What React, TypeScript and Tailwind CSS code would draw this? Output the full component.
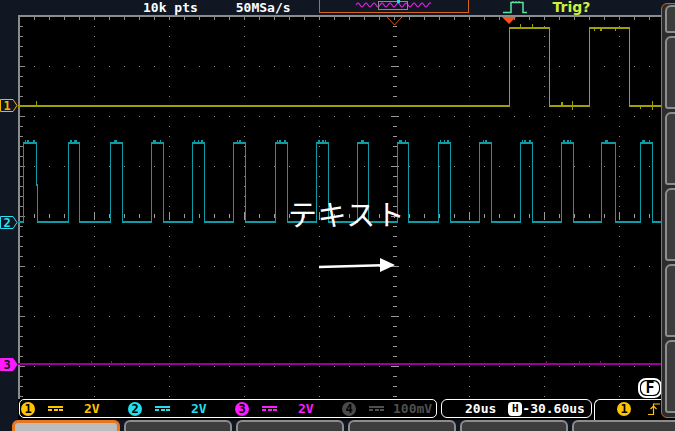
import React from "react";

const mono = "font-['DejaVu_Sans_Mono','Liberation_Mono',monospace] font-bold";

type R = { x: number; y: number; w: number; h: number };

// turn a list of step vertices into crisp pixel rects (2px horizontals, 1px verticals)
function trace(pts: [number, number][]): R[] {
  const out: R[] = [];
  for (let i = 0; i < pts.length - 1; i++) {
    const [x1, y1] = pts[i];
    const [x2, y2] = pts[i + 1];
    if (y1 === y2) out.push({ x: Math.min(x1, x2), y: y1, w: Math.abs(x2 - x1) + 1, h: 2 });
    else out.push({ x: x1, y: Math.min(y1, y2), w: 1, h: Math.abs(y2 - y1) + 2 });
  }
  return out;
}

const MAJ_X = [94, 169, 244, 319, 469, 544, 619];
const MAJ_Y = [66, 116, 166, 266, 316, 366];
const range = (a: number, b: number, s: number) => {
  const r: number[] = [];
  for (let v = a; v <= b; v += s) r.push(v);
  return r;
};

const ch1 = trace([
  [18, 105], [509, 105], [509, 27], [549, 27], [549, 105],
  [589, 105], [589, 27], [629, 27], [629, 105], [675, 105],
]);

const RISES: [number, number][] = [
  [68, 11], [110, 12], [151, 12], [192, 12], [233, 12], [275, 12], [316, 12],
  [357, 11], [397, 11], [438, 12], [479, 12], [520, 12], [561, 12], [601, 14], [640, 12],
];

const ch2Pts: [number, number][] = [
  [18, 221], [23, 221], [23, 142], [36, 142], [36, 184], [37, 184], [37, 221],
];
RISES.forEach(([r, w]) => {
  ch2Pts.push([r, 221], [r, 142], [r + w, 142], [r + w, 221]);
});
ch2Pts.push([675, 221]);
const ch2 = trace(ch2Pts);
const ch2Noise: R[] = [];
[[23, 13] as [number, number], ...RISES].forEach(([r, w], i) => {
  [2, 4, 6, w - 3].forEach((o, j) => {
    if ((i + j) % 3 !== 2) ch2Noise.push({ x: r + o, y: 140, w: 1 + ((i + j) % 2), h: 2 });
  });
});

function Scope() {
  const grid = "#8a8a8a";
  return (
    <svg width={657} height={384} viewBox="18 15 657 384" shapeRendering="crispEdges" className="block">
      <rect x={18} y={15} width={657} height={384} fill="#000" />
      {/* frame */}
      <rect x={18} y={15} width={657} height={2} fill="#8c8c8c" />
      <rect x={18} y={15} width={2} height={384} fill="#8c8c8c" />
      {range(34, 661, 15).map((x) => (
        <rect key={"tt" + x} x={x} y={17} width={1} height={3} fill={grid} />
      ))}
      {range(26, 396, 10).map((y) => (
        <rect key={"lt" + y} x={20} y={y} width={MAJ_Y.includes(y) || y === 216 ? 5 : 3} height={1} fill={grid} />
      ))}
      {/* dotted graticule */}
      {MAJ_X.map((x) =>
        range(26, 396, 10).map((y) => <rect key={`d${x}-${y}`} x={x} y={y} width={1} height={1} fill={grid} />)
      )}
      {MAJ_Y.map((y) =>
        range(34, 661, 15).map((x) => <rect key={`h${x}-${y}`} x={x} y={y} width={1} height={1} fill={grid} />)
      )}
      {/* centre axes */}
      {range(26, 396, 10).map((y) => {
        const big = MAJ_Y.includes(y) || y === 216;
        return <rect key={"cv" + y} x={big ? 391 : 393} y={y} width={big ? 8 : 4} height={1} fill="#9a9a9a" />;
      })}
      {range(34, 661, 15).map((x) => {
        const big = MAJ_X.includes(x);
        return <rect key={"ch" + x} x={x} y={big ? 212 : 214} width={1} height={big ? 8 : 4} fill="#9a9a9a" />;
      })}
      {/* channels */}
      <rect x={18} y={363} width={657} height={2} fill="#990099" />
      {[91, 111, 546, 579, 600].map((x) => (
        <rect key={"m" + x} x={x} y={361} width={1} height={3} fill="#990099" />
      ))}
      {ch2.map((r, i) => (
        <rect key={"c2" + i} x={r.x} y={r.y} width={r.w} height={r.h} fill="#0e9ca4" />
      ))}
      {ch2Noise.map((r, i) => (
        <rect key={"n2" + i} x={r.x} y={r.y} width={r.w} height={r.h} fill="#0e9ca4" />
      ))}
      {ch1.map((r, i) => (
        <rect key={"c1" + i} x={r.x} y={r.y} width={r.w} height={r.h} fill="#a0a000" />
      ))}
      {[
        [36, 101, 1, 5], [520, 24, 1, 4], [532, 24, 1, 4], [561, 102, 2, 3], [572, 101, 1, 9],
        [594, 28, 1, 3], [600, 28, 2, 3], [615, 28, 1, 3], [640, 106, 1, 3], [652, 101, 1, 9],
      ].map(([x, y, w, h]) => (
        <rect key={`s${x}`} x={x} y={y} width={w} height={h} fill="#a0a000" />
      ))}
      {/* trigger markers */}
      <polygon points="502,17 516,17 509,24" fill="#ff5014" shapeRendering="auto" />
      <polyline points="387,17 394.5,25 402,17" fill="none" stroke="#e4501c" strokeWidth={1} shapeRendering="auto" />
    </svg>
  );
}

function Marker({ n, color, filled, top }: { n: number; color: string; filled?: boolean; top: number }) {
  return (
    <svg width={18} height={13} className="absolute left-0" style={{ top }}>
      <polygon points="0.5,0.5 13,0.5 17,6.5 13,12.5 0.5,12.5" fill={filled ? color : "#111623"} stroke={color} strokeWidth={1} />
      <text x={7} y={10.5} textAnchor="middle" fontSize={12} fontWeight={700} fill={filled ? "#111623" : color} fontFamily="DejaVu Sans Mono, monospace">
        {n}
      </text>
    </svg>
  );
}

function Dc({ color }: { color: string }) {
  return (
    <svg width={15} height={6} className="shrink-0" shapeRendering="crispEdges">
      <rect x={0} y={0} width={15} height={2} fill={color} />
      <rect x={0} y={3} width={4} height={2} fill={color} />
      <rect x={5.5} y={3} width={4} height={2} fill={color} />
      <rect x={11} y={3} width={4} height={2} fill={color} />
    </svg>
  );
}

function Chan({ n, bg, fg, text, gap = 21, width = 107 }: { n: number; bg: string; fg: string; text: string; gap?: number; width?: number }) {
  return (
    <div className="flex items-center shrink-0" style={{ width }}>
      <div className={`w-[14px] h-[14px] rounded-full flex items-center justify-center text-[12px] leading-none text-black ${mono}`} style={{ background: bg }}>
        {n}
      </div>
      <div className="ml-[13px]">
        <Dc color={fg} />
      </div>
      <span className={`text-[13px] leading-none ${mono}`} style={{ color: fg, marginLeft: gap }}>
        {text}
      </span>
    </div>
  );
}

export default function App() {
  const wave: string[] = [];
  for (let x = 0; x <= 75; x++) wave.push(`${37 + x},${(5 - 2 * Math.sin((x / 8) * Math.PI * 2)).toFixed(2)}`);
  return (
    <div className="relative w-[675px] h-[431px] overflow-hidden bg-[#111623] text-white">
      {/* top bar */}
      <div className="h-[15px] flex items-start">
        <span className={`ml-[143px] text-[13px] leading-[15px] text-white ${mono}`}>10k pts</span>
        <span className={`ml-[38px] text-[13px] leading-[15px] text-white ${mono}`}>50MSa/s</span>
        <div className="ml-[28px] w-[150px] h-[13px] border-x border-b border-[#d4641c] relative">
          <svg width={150} height={12} className="absolute left-[-1px] top-0">
            <polyline points={wave.join(" ")} fill="none" stroke="#e020e0" strokeWidth={1.2} />
            <rect x={59.5} y={1.5} width={29} height={8} fill="none" stroke="#8a8a8a" strokeWidth={1} />
            <rect x={78} y={0} width={3} height={3} fill="#20d8f0" />
          </svg>
        </div>
        <svg width={24} height={14} className="ml-[34px]">
          <path d="M0 12.5 H8 V2.5 H20 V12.5 H24" fill="none" stroke="#5fe39a" strokeWidth={1.5} />
          <path d="M10 1 V3 M13 1 V3 M16 1 V3" stroke="#5fe39a" strokeWidth={1} />
        </svg>
        <span className="ml-[26px] text-[14px] leading-[14px] font-bold text-[#cdf03c] font-['DejaVu_Sans',sans-serif]">Trig?</span>
      </div>

      {/* screen */}
      <div className="flex h-[405px]">
        <div className="w-[18px] shrink-0" />
        <div className="flex-1 flex flex-col bg-black">
          <Scope />
          <div className="h-[21px] flex items-start">
            <div className="ml-px w-[418px] h-[19px] border border-white rounded-[5px] flex items-center pl-px">
              <Chan n={1} bg="#ffc400" fg="#ffc400" text="2V" />
              <Chan n={2} bg="#22dff0" fg="#22dff0" text="2V" />
              <Chan n={3} bg="#ff1aff" fg="#ff1aff" text="2V" />
              <Chan n={4} bg="#4a4a4a" fg="#4f4f4f" text="100mV" gap={9} width={95} />
            </div>
            <div className={`ml-[4px] w-[151px] h-[19px] border border-white rounded-[6px] flex items-center pl-[23px] text-[13px] leading-none ${mono}`}>
              <span>20us</span>
              <span className="ml-[12px] w-[14px] h-[14px] rounded-[4px] bg-white text-black text-[11px] flex items-center justify-center">H</span>
              <span>-30.60us</span>
            </div>
            <div className="ml-[2px] flex-1 h-[21px] border-l border-t border-white rounded-tl-[6px] flex items-center pl-[22px] pb-[3px]">
              <div className={`w-[14px] h-[14px] rounded-full bg-[#ffc400] text-black flex items-center justify-center text-[12px] leading-none ${mono}`}>1</div>
              <svg width={14} height={12} className="ml-[17px]">
                <path d="M0 11.5 H5.5 V1 H12" fill="none" stroke="#ffc400" strokeWidth={1.2} />
                <path d="M2.5 6 L5.5 3 L8.5 6" fill="none" stroke="#ffc400" strokeWidth={1.2} />
              </svg>
            </div>
          </div>
        </div>
      </div>

      {/* soft keys */}
      <div className="h-[11px] flex gap-[4px] pl-[12px]">
        <div className="w-[108px] h-[16px] shrink-0 rounded-t-[6px] border-[3px] border-[#e8761e] bg-[#bcbcbc]" />
        {[0, 1, 2, 3, 4].map((i) => (
          <div key={i} className="w-[108px] h-[16px] shrink-0 rounded-t-[6px] border-2 border-[#8c8c8c] bg-[#3d3d3d]" />
        ))}
      </div>

      {/* channel markers */}
      <Marker n={1} color="#f2b400" top={99} />
      <Marker n={2} color="#2ee0f0" top={216} />
      <Marker n={3} color="#ff1aff" filled top={358} />

      {/* annotation */}
      <div className="absolute left-[288px] top-[199px] text-[29px] leading-none tracking-[0.5px] text-white font-['Noto_Sans_CJK_JP',sans-serif]">
        テキスト
      </div>
      <svg width={80} height={18} className="absolute left-[318px] top-[256px]">
        <line x1={1} y1={11} x2={64} y2={9.2} stroke="#fff" strokeWidth={2.6} />
        <polygon points="62,2 77,9 62,16" fill="#fff" />
      </svg>

      {/* F badge */}
      <div className="absolute left-[638px] top-[378px] w-[24px] h-[20px] rounded-[8px] border-2 border-white bg-black p-px">
        <div className={`w-full h-full rounded-[6px] bg-white text-black text-[15px] leading-none flex items-center justify-center ${mono}`}>F</div>
      </div>

      {/* side menu */}
      <div className="absolute left-[661px] top-[3px] w-[24px] h-[415px] border border-[#c8641e] rounded-l-[6px] bg-[#2c2c2c] flex flex-col gap-[3px] pl-[3px] pt-px">
        <div className="h-[28px] shrink-0 rounded-tl-[6px] rounded-bl-[3px] border-2 border-[#8e8e8e] bg-[#3c3c3c]" />
        {[0, 1, 2, 3, 4].map((i) => (
          <div key={i} className="h-[73px] shrink-0 rounded-tl-[6px] rounded-bl-[3px] border-2 border-[#8e8e8e] bg-[#3c3c3c]" />
        ))}
      </div>
    </div>
  );
}
